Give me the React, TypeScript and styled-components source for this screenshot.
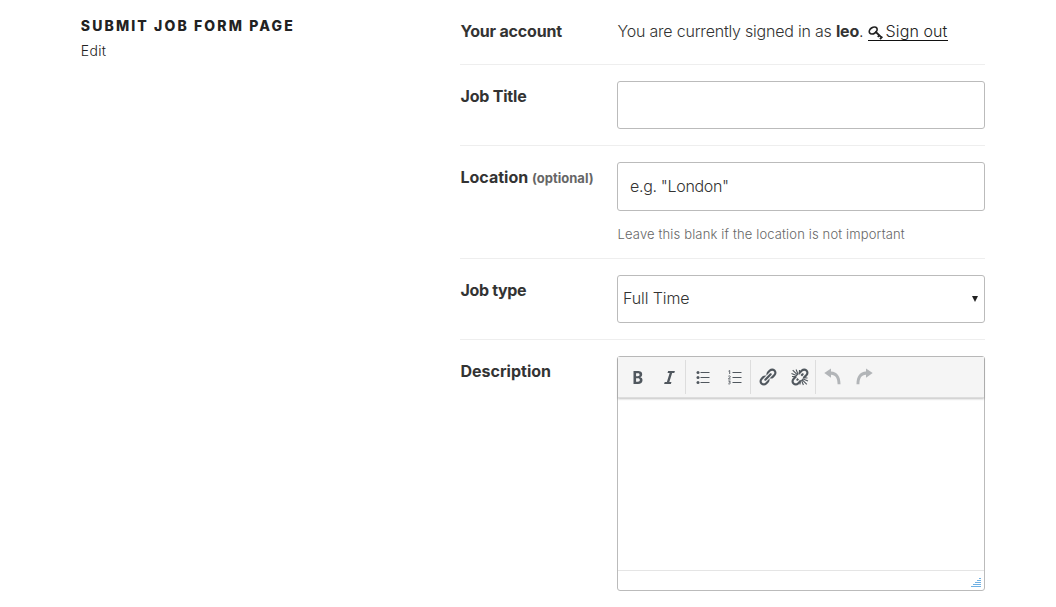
import React from 'react';
import styled, { createGlobalStyle } from 'styled-components';

const Global = createGlobalStyle`
  * { box-sizing: border-box; }
  body { margin: 0; background: #fff; color: #333; font-family: "Inter", "Liberation Sans", sans-serif; font-size: 16px; font-weight: 300; line-height: 24px; overflow: hidden; }
`;

const Page = styled.div`
  display: grid;
  grid-template-columns: 380px 525px;
  width: 985px;
  height: 607px;
  padding-left: 80px;
`;

const Header = styled.header`
  padding: 14px 0 0 0.8px;
`;

const Title = styled.h1`
  margin: 0;
  color: #222;
  font-size: 14px;
  font-weight: 800;
  line-height: 24px;
  letter-spacing: 2.12px;
  white-space: nowrap;
`;

const EditLink = styled.a`
  display: block;
  color: #222;
  font-size: 14px;
  line-height: 25px;
  letter-spacing: 0.3px;
`;

const Form = styled.form`
  display: flex;
  flex-direction: column;
`;

const Row = styled.fieldset<{ $h?: number }>`
  display: grid;
  grid-template-columns: 157px 368px;
  margin: 0;
  padding: 16px 0 0;
  border: 0;
  border-bottom: 1px solid #eee;
  height: ${(p) => p.$h ?? 81}px;
  &:last-child { border-bottom: 0; }
`;

const Label = styled.label<{ $ls?: number }>`
  padding: 3px 0 0 0.5px;
  font-weight: 700;
  letter-spacing: ${(p) => p.$ls ?? -0.2}px;
  white-space: nowrap;
`;

const Optional = styled.small`
  color: #666;
  font-size: 13px;
  letter-spacing: 0;
`;

const Account = styled.div`
  padding: 3px 0 0 0.5px;
  letter-spacing: -0.21px;
  white-space: nowrap;
  b { font-weight: 700; }
`;

const SignOut = styled.a`
  display: inline-block;
  height: 20px;
  color: #222;
  line-height: 20px;
  letter-spacing: 0.1px;
  border-bottom: 1px solid #111;
`;

const Field = styled.div`
  min-width: 0;
`;

const Input = styled.input<{ $h?: number }>`
  display: block;
  width: 100%;
  height: ${(p) => p.$h ?? 48}px;
  padding: 0 12px 2px;
  border: 1px solid #bbb;
  border-radius: 3px;
  font: inherit;
  letter-spacing: -0.32px;
  outline: 0;
  &::placeholder { color: #333; opacity: 1; }
`;

const Help = styled.small`
  display: block;
  padding: 11px 0 0 0.5px;
  color: #666;
  font-size: 13px;
  white-space: nowrap;
  letter-spacing: 0.15px;
`;

const Select = styled.div`
  display: flex;
  align-items: center;
  justify-content: space-between;
  height: 48px;
  padding: 0 6px 2px 5px;
  border: 1px solid #bbb;
  border-radius: 3px;
  letter-spacing: -0.1px;
  svg { margin-top: 1px; }
`;

const Editor = styled.div`
  display: flex;
  flex-direction: column;
  height: 235px;
  border: 1px solid #bbb;
  border-radius: 3px;
`;

const Toolbar = styled.div`
  display: flex;
  height: 41px;
  padding: 3px;
  background: #f5f5f5;
  border-bottom: 1px solid #ddd;
  box-shadow: 0 1px 2px rgba(0, 0, 0, 0.25);
`;

const Group = styled.div`
  display: flex;
  height: 34px;
  border-right: 1px solid #ddd;
  &:last-child { border-right: 0; }
`;

const Tool = styled.button<{ $off?: boolean }>`
  display: grid;
  place-items: center;
  width: 32px;
  height: 34px;
  padding: 0 0 0 1px;
  border: 0;
  background: none;
  color: #50575e;
  opacity: ${(p) => (p.$off ? 0.4 : 1)};
  svg { display: block; fill: currentColor; }
`;

const Body = styled.div`
  flex: 1;
`;

const Status = styled.div`
  display: flex;
  justify-content: flex-end;
  align-items: flex-end;
  height: 20px;
  padding: 0 3px 3px 0;
  border-top: 1px solid #e5e5e5;
`;

const LINK =
  'M17.74 2.76c1.68 1.69 1.68 4.41 0 6.1l-1.53 1.52c-1.12 1.12-2.7 1.47-4.14 1.09l2.62-2.61.76-.77.76-.76c.84-.84.84-2.2 0-3.04-.84-.85-2.2-.85-3.04 0l-.77.76-3.38 3.38c-.37-1.44-.02-3.02 1.1-4.14l1.52-1.53c1.69-1.68 4.42-1.68 6.1 0zM8.59 13.43l5.34-5.34c.42-.42.42-1.1 0-1.52-.44-.43-1.13-.39-1.53 0l-5.33 5.34c-.42.42-.42 1.1 0 1.52.44.43 1.13.39 1.52 0zm-.76 2.29l4.14-4.15c.38 1.44.03 3.02-1.09 4.14l-1.52 1.53c-1.69 1.68-4.41 1.68-6.1 0-1.68-1.68-1.68-4.42 0-6.1l1.53-1.52c1.12-1.12 2.7-1.47 4.14-1.1l-4.14 4.15c-.85.84-.85 2.2 0 3.05.84.84 2.2.84 3.04 0z';

const Svg = ({ children }: { children: React.ReactNode }) => (
  <svg width="20" height="20" viewBox="0.5 0 20 20">{children}</svg>
);

const Bold = () => (
  <Svg><path d="M6 4v13h4.54c1.37 0 2.46-.33 3.26-1 .8-.66 1.2-1.58 1.2-2.77 0-.84-.17-1.51-.51-2.01s-.9-.85-1.67-1.03v-.09c.57-.1 1.02-.4 1.36-.9s.51-1.13.51-1.91c0-1.14-.39-1.98-1.17-2.5C12.75 4.26 11.5 4 9.78 4H6zm2.57 5.15V6.26h1.36c.73 0 1.27.11 1.61.32.34.22.51.58.51 1.07 0 .54-.16.92-.47 1.15s-.82.35-1.51.35h-1.5zm0 2.19h1.6c1.44 0 2.16.53 2.16 1.61 0 .6-.17 1.05-.51 1.34s-.86.43-1.57.43H8.57v-3.38z" /></Svg>
);
const Italic = () => <Svg><path d="M14.78 6h-2.13l-2.8 9h2.12l-.62 2H4.6l.62-2h2.14l2.8-9H8.03l.62-2h6.75z" /></Svg>;
const Bullets = () => (
  <Svg>
    {[5.5, 10.5, 15.5].map((y) => <g key={y}><circle cx="5.5" cy={y} r="1.5" /><rect x="8" y={y - 0.5} width="9" height="1" /></g>)}
  </Svg>
);
const Numbers = () => (
  <Svg>
    {[5.5, 10.5, 15.5].map((y) => <rect key={y} x="8" y={y - 0.5} width="9" height="1" />)}
    <path fill="none" stroke="currentColor" strokeWidth=".9" d="M4 4.2l1.2-.7V7M3.8 9.4c.5-.8 2-.7 2 .2 0 .8-1 1.2-2 2.400h2.300M3.800 14h2l-1 1.200c1.700 0 1.400 2.300-1 1.600" />
  </Svg>
);
const Link = () => <Svg><path d={LINK} /></Svg>;
const Unlink = () => (
  <Svg>
    <path d={LINK} />
    <path stroke="#f5f5f5" strokeWidth="4.500" d="M5.500 5.500l9.500 9.500" />
    <path stroke="currentColor" strokeWidth="1.100" d="M3.200 3.200l5 5M6.600 2.500l2 5M10 3l-.3 4.500M2 6.500l5.500 2.200M2.500 9.500l4.500.3M17.300 17.300l-5-5M13.900 18l-2-5M10.500 17.500l.3-4.500M18.500 14l-5.500-2.200M18 11l-4.500-.3" />
  </Svg>
);
const Undo = () => <Svg><path d="M8.500 1.500v3C14.500 4.900 18 9 18 17.300h-2.900c0-6-2-9.200-6.600-9.500v3L1.800 6z" /></Svg>;
const Redo = () => <Svg><path d="M11.500 1.500v3C5.500 4.900 2 9 2 17.300h2.900c0-6 2-9.200 6.600-9.500v3L18.200 6z" /></Svg>;

const KeyIcon = styled.svg`
  display: inline-block;
  width: 15px;
  height: 16px;
  margin-right: 3px;
  vertical-align: -4px;
`;

export default function App() {
  return (
    <>
      <Global />
      <Page>
        <Header>
          <Title>SUBMIT JOB FORM PAGE</Title>
          <EditLink>Edit</EditLink>
        </Header>
        <Form>
          <Row $h={65}>
            <Label>Your account</Label>
            <Account>
              You are currently signed in as <b>leo</b>.{' '}
              <SignOut>
                <KeyIcon viewBox="0 0 15 16" fill="none" stroke="#222">
                  <ellipse cx="5.200" cy="5.500" rx="4.300" ry="3" strokeWidth="1.700" transform="rotate(-35 5.200 5.500)" />
                  <path d="M7.300 6.500l6.400 6.200M9.800 12l1.900-2.200M12 14.200l2.400-2.600" strokeWidth="1.800" />
                </KeyIcon>
                Sign out
              </SignOut>
            </Account>
          </Row>
          <Row>
            <Label>Job Title</Label>
            <Field><Input /></Field>
          </Row>
          <Row $h={113}>
            <Label $ls={0}>Location <Optional>(optional)</Optional></Label>
            <Field>
              <Input $h={49} placeholder={'e.g. "London"'} />
              <Help>Leave this blank if the location is not important</Help>
            </Field>
          </Row>
          <Row>
            <Label $ls={-0.35}>Job type</Label>
            <Select>
              Full Time
              <svg width="6" height="6" viewBox="0 0 6 6"><path d="M0 0h6L3 6z" fill="#222" /></svg>
            </Select>
          </Row>
          <Row $h={252}>
            <Label $ls={0}>Description</Label>
            <Editor>
              <Toolbar>
                <Group><Tool type="button"><Bold /></Tool><Tool type="button"><Italic /></Tool></Group>
                <Group><Tool type="button"><Bullets /></Tool><Tool type="button"><Numbers /></Tool></Group>
                <Group><Tool type="button"><Link /></Tool><Tool type="button"><Unlink /></Tool></Group>
                <Group><Tool type="button" $off><Undo /></Tool><Tool type="button" $off><Redo /></Tool></Group>
              </Toolbar>
              <Body />
              <Status>
                <svg width="10" height="9" viewBox="0 0 10 9" stroke="#6fb1e4">
                  <path d="M8 .5h2M6 2.500h4M4 4.500h6M2 6.500h8M0 8.500h10" />
                </svg>
              </Status>
            </Editor>
          </Row>
        </Form>
      </Page>
    </>
  );
}
